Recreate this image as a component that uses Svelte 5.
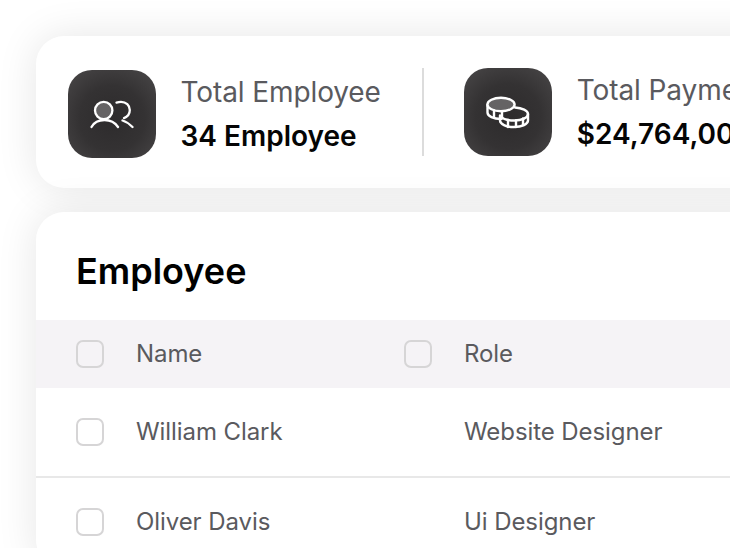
<script>
  const rows = [
    { name: 'William Clark', role: 'Website Designer' },
    { name: 'Oliver Davis', role: 'Ui Designer' }
  ];
</script>

<div class="page">
  <section class="stats">
    <div class="stat first">
      <div class="icon">
        <svg width="44" height="30" viewBox="0 0 44 30" fill="none" stroke="#fff" stroke-width="2.300" stroke-linecap="round">
          <circle cx="13.700" cy="11.500" r="8.700" fill="#656364" />
          <path d="M1.500 28C4 23.500 8 21 14.500 21S25 23.500 28 28" />
          <path d="M26.500 3.600c1.500-.5 3-.8 4.500-.8 5 0 8.800 3.500 8.800 8.300 0 3.700-2.300 6.700-5.800 8" />
          <path d="M32.500 21.500c3.500 1 6.500 3 10 6.500" />
        </svg>
      </div>
      <div class="txt">
        <div class="label">Total Employee</div>
        <div class="value">34 Employee</div>
      </div>
    </div>
    <div class="divider"></div>
    <div class="stat">
      <div class="icon">
        <svg width="44" height="36" viewBox="0 0 44 36" fill="none" stroke="#fff" stroke-width="2.400" stroke-linejoin="round" stroke-linecap="round">
          <path d="M1.500 11v7.500c0 3.600 6 6.500 13.500 6.500" />
          <path d="M29 13.500c7 .5 13 3 13 6.500v6.500c0 3.500-6 6.500-14 6.500s-14-3-14-6.500v-5" />
          <path d="M15 22.500c2 2.500 7 4 13.500 4 7.500 0 13.500-2.800 13.500-6.500" />
          <ellipse cx="15" cy="10.500" rx="13.600" ry="6.700" fill="#656364" />
          <path d="M8 16.500v6.500M16 17.500v7M22 26v7M30 26.500v6.500M37 24.500v6.500" />
        </svg>
      </div>
      <div class="txt">
        <div class="label">Total Payment</div>
        <div class="value">$24,764,000</div>
      </div>
    </div>
  </section>

  <section class="table">
    <h1>Employee</h1>
    <div class="row head">
      <div class="cell name"><span class="check"></span><span class="text">Name</span></div>
      <div class="cell role"><span class="check"></span><span class="text">Role</span></div>
    </div>
    {#each rows as r}
      <div class="row">
        <div class="cell name"><span class="check"></span><span class="text">{r.name}</span></div>
        <div class="cell role plain"><span class="text">{r.role}</span></div>
      </div>
    {/each}
  </section>
</div>

<style>
  :global(body) {
    margin: 0;
    background: #fff;
    overflow: hidden;
    height: 548px;
  }
  .page {
    width: 730px;
    height: 548px;
    overflow: hidden;
    box-sizing: border-box;
    padding: 36px 0 0 36px;
    display: flex;
    flex-direction: column;
    gap: 24px;
    font-family: Inter, sans-serif;
  }
  .stats, .table {
    background: #fff;
    border-radius: 28px;
    width: 1000px;
    box-shadow: 0 0 40px rgba(0, 0, 0, 0.1);
    flex: none;
  }
  .stats {
    height: 152px;
    box-sizing: border-box;
    padding: 32px;
    display: flex;
    align-items: center;
  }
  .stat {
    display: flex;
    align-items: center;
    gap: 24.500px;
    flex: none;
  }
  .first { margin-top: 4px; }
  .icon {
    width: 88px;
    height: 88px;
    border-radius: 24px;
    background: radial-gradient(circle at 50% 55%, #2d2b2c 0%, #343233 50%, #4a4849 100%);
    display: flex;
    align-items: center;
    justify-content: center;
    flex: none;
  }
  .divider {
    width: 2px;
    height: 88px;
    background: #dcdcdc;
    margin: 0 40.500px 0 41px;
    flex: none;
  }
  .label {
    font-size: 28px;
    line-height: 32px;
    letter-spacing: -0.1px;
    color: #5a5a5e;
    white-space: nowrap;
  }
  .value {
    font-size: 28px;
    font-weight: 600;
    line-height: 32px;
    margin-top: 12px;
    color: #050505;
    white-space: nowrap;
  }
  .table {
    overflow: hidden;
  }
  h1 {
    margin: 0;
    padding: 37px 0 27px 40px;
    font-size: 36px;
    line-height: 44px;
    font-weight: 600;
    color: #000;
  }
  .row {
    display: flex;
    height: 90px;
    border-bottom: 2px solid #e8e8e8;
    box-sizing: border-box;
    align-items: center;
    font-size: 24px;
    letter-spacing: -0.08px;
    color: #5a5a5e;
  }
  .head {
    height: 68px;
    background: #f5f3f6;
    border-bottom: 0;
  }
  .cell {
    display: flex;
    align-items: center;
    gap: 32px;
    white-space: nowrap;
    line-height: 28px;
  }
  .text {
    margin-bottom: 1px;
  }
  .name {
    width: 328px;
    padding-left: 40px;
  }
  .plain {
    padding-left: 60px;
  }
  .check {
    width: 24px;
    height: 24px;
    border: 2px solid #d6d5d6;
    border-radius: 7px;
    background: #fff;
    flex: none;
  }
  .head .check {
    background: #f5f3f6;
  }
</style>
